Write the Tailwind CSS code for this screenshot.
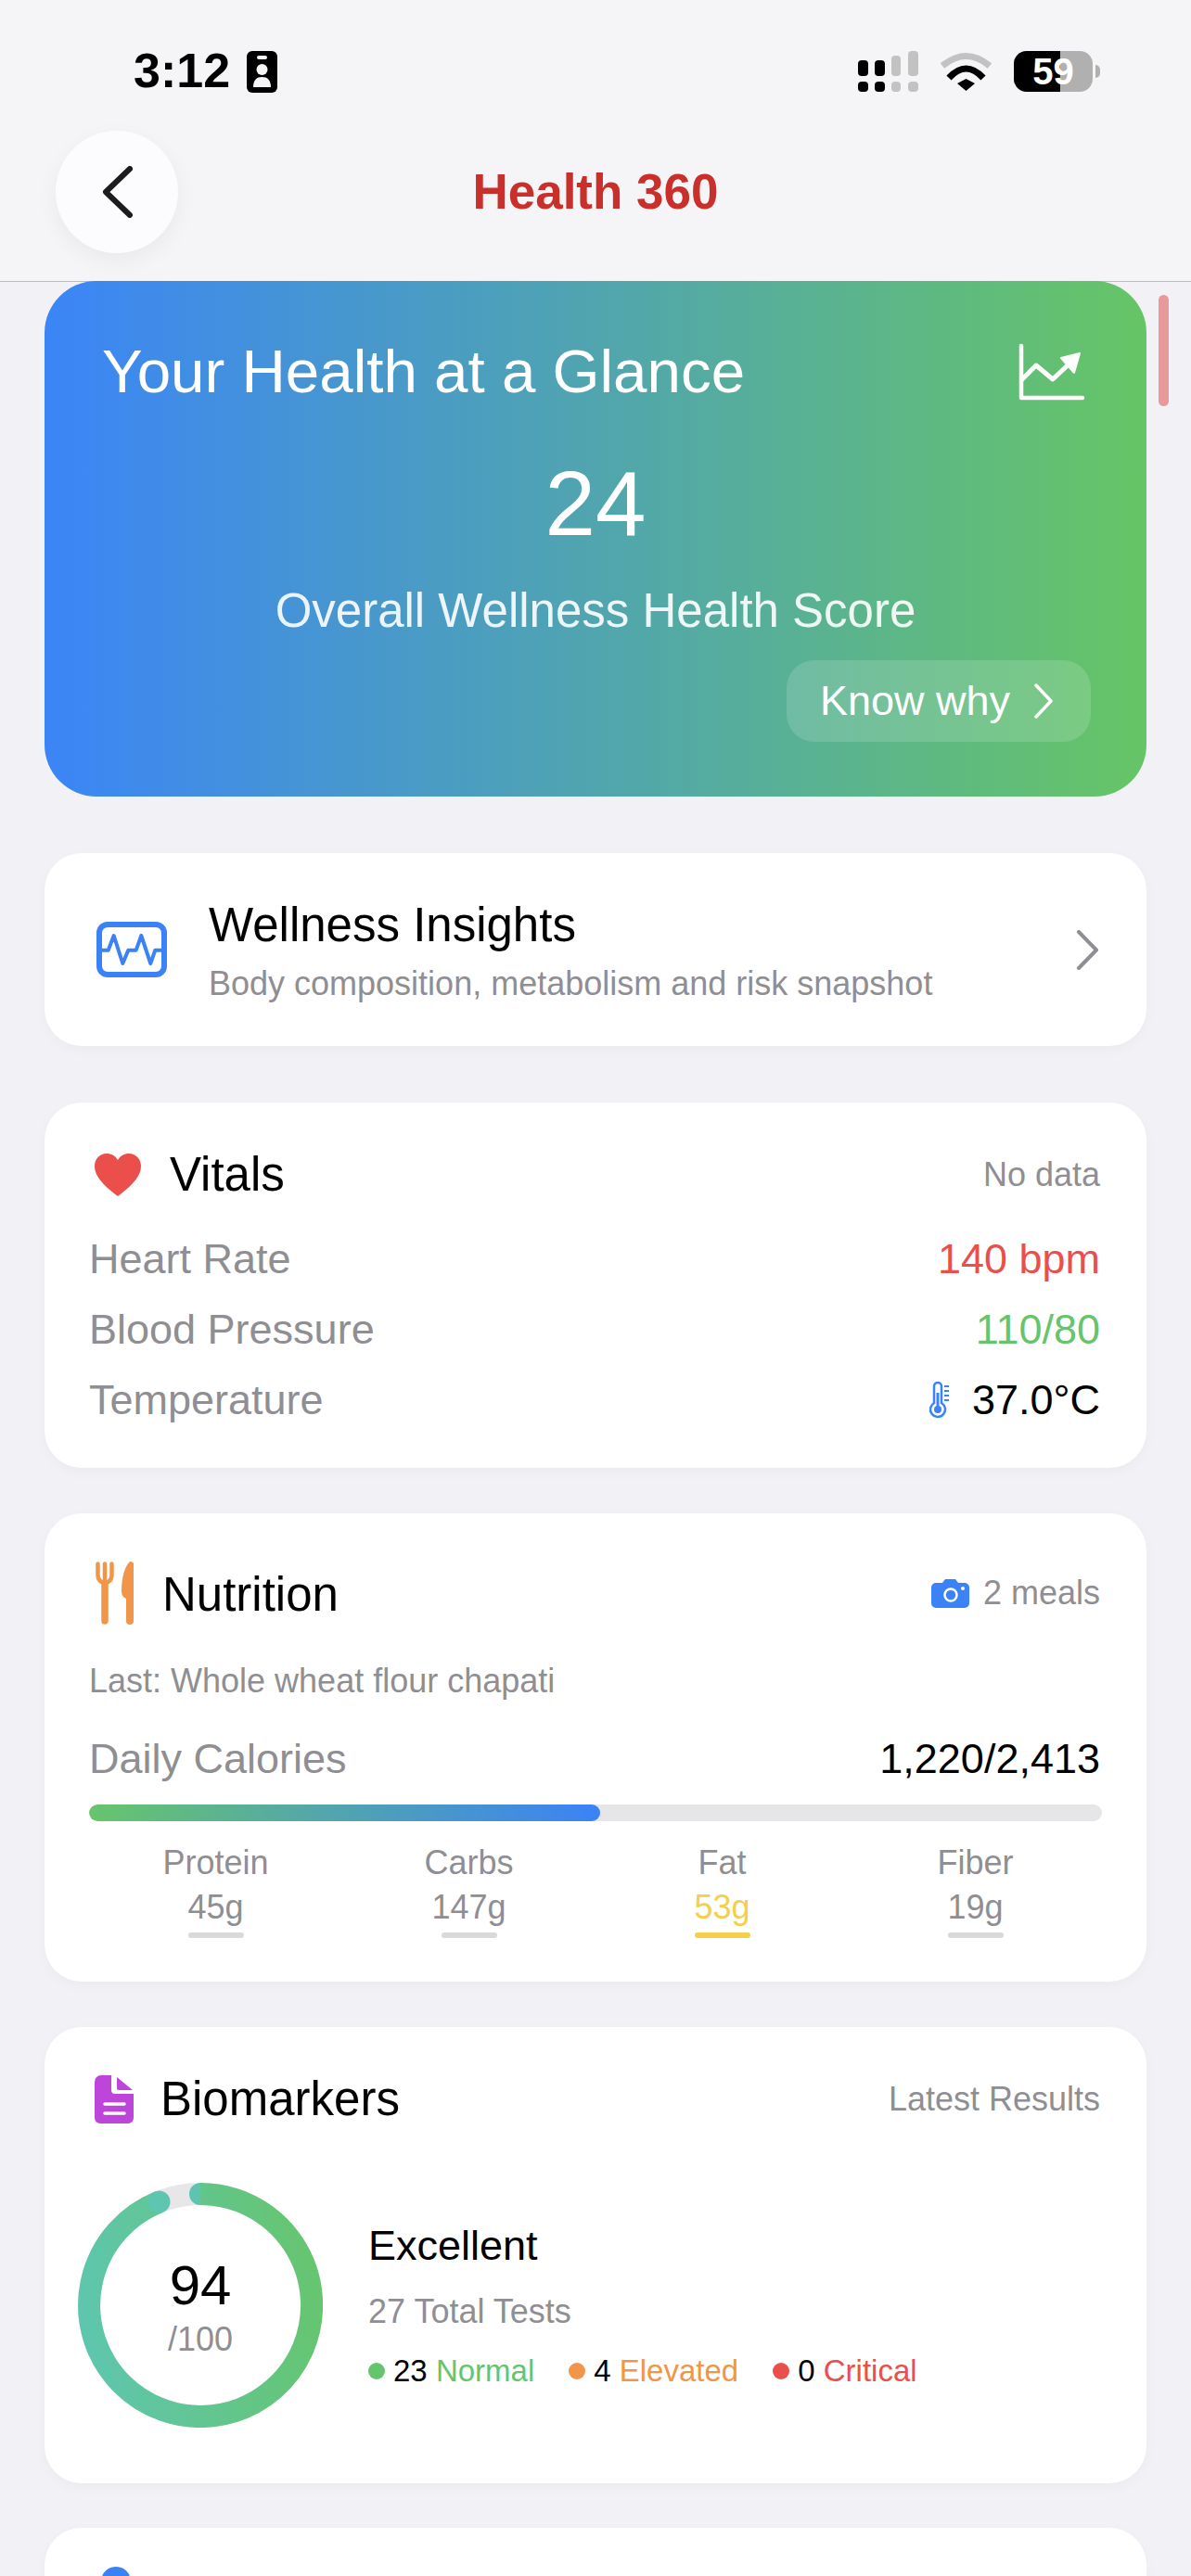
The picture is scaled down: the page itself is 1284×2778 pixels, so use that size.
<!DOCTYPE html>
<html lang="en">
<head>
  <meta charset="UTF-8" />
  <meta name="viewport" content="width=device-width, initial-scale=1.0"/>
  <title>Health 360</title>
  <script src="https://cdn.jsdelivr.net/npm/@tailwindcss/browser@4"></script>
</head>
<body class="bg-[#f1f1f6]">
<div class="relative w-[1284px] h-[2778px] overflow-hidden font-['Liberation_Sans',Arial,sans-serif] text-black">

  <!-- Header -->
  <header class="h-[304px] pt-[32px] bg-[#f5f5f7] border-b border-[#bdbdc1]">
    <div class="h-[90px] flex items-center justify-between pl-[144px] pr-[98px]">
      <div class="flex items-center gap-[18px]">
        <span class="text-[52px] leading-[60px] font-bold pb-[3px]">3:12</span>
        <svg class="w-[33px] h-[45px]" viewBox="0 0 33 45">
          <rect width="33" height="45" rx="6" fill="#000"/>
          <rect x="11" y="5" width="11" height="4" rx="2" fill="#f5f5f7"/>
          <circle cx="16.5" cy="20" r="6" fill="#f5f5f7"/>
          <path d="M7 39c0-8 4-11 9.500-11s9.500 3 9.500 11z" fill="#f5f5f7"/>
        </svg>
      </div>
      <div class="flex items-center gap-[23px]">
        <svg class="w-[65px] h-[44px]" viewBox="0 0 65 44">
          <rect x="0" y="10" width="11" height="17" rx="4" fill="#000"/>
          <rect x="18" y="10" width="11" height="17" rx="4" fill="#000"/>
          <rect x="36" y="5" width="10" height="22" rx="4" fill="#c2c2c2"/>
          <rect x="54" y="0" width="11" height="27" rx="4" fill="#c2c2c2"/>
          <rect x="0" y="33" width="11" height="11" rx="4" fill="#000"/>
          <rect x="18" y="33" width="11" height="11" rx="4" fill="#000"/>
          <rect x="36" y="33" width="10" height="11" rx="4" fill="#c2c2c2"/>
          <rect x="54" y="33" width="11" height="11" rx="4" fill="#c2c2c2"/>
        </svg>
        <svg class="w-[57px] h-[42px]" viewBox="0 0 57 42" fill="none">
          <path d="M3 15Q28.500-6 54 15" stroke="#c2c2c2" stroke-width="7"/>
          <path d="M10 28Q28.500 8 47 28" stroke="#000" stroke-width="7"/>
          <path d="M19 34L28.500 29L38 34L28.500 42Z" fill="#000"/>
        </svg>
        <div class="flex items-center gap-[3px]">
          <div class="relative w-[85px] h-[44px] rounded-[14px] bg-[#b0b0b0] overflow-hidden flex items-center justify-center">
            <div class="absolute left-0 top-0 bottom-0 w-[50px] bg-black"></div>
            <span class="relative text-white font-bold text-[40px] leading-[44px]">59</span>
          </div>
          <div class="w-[5px] h-[14px] rounded-r-full bg-[#b0b0b0]"></div>
        </div>
      </div>
    </div>

    <div class="grid grid-cols-[1fr_auto_1fr] items-center px-[60px] pt-[19px]">
      <div class="w-[132px] h-[132px] rounded-full bg-[#fcfcfe] shadow-[0_8px_24px_rgba(0,0,0,0.05)] flex items-center justify-center">
        <svg class="w-[33px] h-[56px]" viewBox="0 0 33 56" fill="none">
          <path d="M30 3L4 28L30 53" stroke="#1c1c1e" stroke-width="6" stroke-linecap="round" stroke-linejoin="round"/>
        </svg>
      </div>
      <h1 class="text-[53px] leading-[60px] font-bold text-[#c9302c]">Health 360</h1>
      <div></div>
    </div>
  </header>

  <!-- Scroll indicator -->
  <div class="absolute left-[1249px] top-[318px] w-[11px] h-[120px] rounded-full bg-[#e89a9a]"></div>

  <main class="px-[48px] -mt-[1px]">

    <!-- Hero -->
    <section class="h-[556px] rounded-[56px] bg-linear-to-r/srgb from-[#3b85f7] to-[#66c566] pt-[56px] pl-[62px] pr-[60px] text-white">
      <div class="flex items-center justify-between pr-[6px]">
        <h2 class="text-[65.5px] leading-[84px]">Your Health at a Glance</h2>
        <svg class="w-[72px] h-[62px]" viewBox="0 0 72 62" fill="none" stroke="#fff" stroke-linecap="round" stroke-linejoin="round">
          <path d="M3 3V59H69" stroke-width="4.500"/>
          <path d="M4 39L19 24L37 39L54 23" stroke-width="5"/>
          <path d="M46 16L66 11L60 32Z" fill="#fff" stroke-width="2"/>
        </svg>
      </div>
      <div class="mt-[44px] text-center text-[98px] leading-[112px] pr-[2px]">24</div>
      <p class="mt-[30px] text-center text-[51px] leading-[60px] text-white/90 pr-[2px]">Overall Wellness Health Score</p>
      <div class="mt-[23px] flex justify-end">
        <div class="w-[328px] h-[88px] rounded-[30px] bg-white/15 flex items-center pl-[36px] gap-[25px]">
          <span class="text-[45px] leading-[56px]">Know why</span>
          <svg class="w-[22px] h-[38px]" viewBox="0 0 22 38" fill="none">
            <path d="M3 2L19 19L3 36" stroke="#fff" stroke-width="3.500" stroke-linecap="round" stroke-linejoin="round"/>
          </svg>
        </div>
      </div>
    </section>

    <!-- Wellness Insights -->
    <section class="mt-[61px] h-[208px] rounded-[40px] bg-white shadow-[0_4px_14px_rgba(0,0,0,0.03)] flex items-center pl-[56px] pr-[51px]">
      <svg class="w-[76px] h-[60px] shrink-0" viewBox="0 0 76 60" fill="none">
        <rect x="3" y="3" width="70" height="54" rx="9" stroke="#3b82f6" stroke-width="6"/>
        <path d="M6 30.700H12.700L18.700 15L28.300 45L34.300 30.700H42.700L48.300 15L58.300 45L63.300 30.700H71" stroke="#3b82f6" stroke-width="4" stroke-linejoin="round"/>
      </svg>
      <div class="ml-[45px] mt-[3px] flex-1">
        <h3 class="text-[51px] leading-[60px]">Wellness Insights</h3>
        <p class="mt-[11px] text-[36px] leading-[44px] text-[#8e8e93]">Body composition, metabolism and risk snapshot</p>
      </div>
      <svg class="w-[25px] h-[43px] shrink-0" viewBox="0 0 25 43" fill="none">
        <path d="M3 2L22 21.500L3 41" stroke="#8e8e93" stroke-width="4" stroke-linecap="round" stroke-linejoin="round"/>
      </svg>
    </section>

    <!-- Vitals -->
    <section class="mt-[61px] h-[394px] rounded-[40px] bg-white shadow-[0_4px_14px_rgba(0,0,0,0.03)] pt-[48px] pl-[48px] pr-[50px]">
      <div class="flex items-center justify-between">
        <div class="flex items-center">
          <svg class="ml-[6px] w-[50px] h-[46px]" viewBox="0 0 50 46">
            <path d="M25 46C8 33 0 24 0 13.500C0 5.500 6 0 13 0C18 0 22.500 2.500 25 7C27.500 2.500 32 0 37 0C44 0 50 5.500 50 13.500C50 24 42 33 25 46Z" fill="#ea4f4b"/>
          </svg>
          <h3 class="ml-[31px] text-[51px] leading-[60px]">Vitals</h3>
        </div>
        <span class="text-[36px] leading-[44px] text-[#8e8e93]">No data</span>
      </div>
      <div class="mt-[23px] text-[45px] leading-[76px]">
        <div class="flex justify-between"><span class="text-[#8e8e93]">Heart Rate</span><span class="text-[#ea4f4b]">140 bpm</span></div>
        <div class="flex justify-between"><span class="text-[#8e8e93]">Blood Pressure</span><span class="text-[#66c56c]">110/80</span></div>
        <div class="flex justify-between">
          <span class="text-[#8e8e93]">Temperature</span>
          <span class="flex items-center gap-[24px]">
            <svg class="w-[22px] h-[40px]" viewBox="0 0 22 40" fill="none" stroke="#3b82f6">
              <path d="M5 23V5a4 4 0 0 1 8 0v18a8 8 0 1 1-8 0z" stroke-width="2.500"/>
              <circle cx="9" cy="30" r="4" fill="#3b82f6" stroke="none"/>
              <path d="M9 12V28" stroke-width="3"/>
              <path d="M16 5h5M16 10h5M16 15h5M16 20h5" stroke-width="2"/>
            </svg>
            37.0°C
          </span>
        </div>
      </div>
    </section>

    <!-- Nutrition -->
    <section class="mt-[49px] h-[505px] rounded-[40px] bg-white shadow-[0_4px_14px_rgba(0,0,0,0.03)] pt-[56px] px-[48px]">
      <div class="flex items-center justify-between h-[60px] pr-[2px]">
        <div class="flex items-center">
          <svg class="ml-[7px] w-[42px] h-[68px]" viewBox="0 0 42 68" fill="none">
            <path d="M2.500 2.500V15a7.500 8 0 0 0 15 0V2.500" stroke="#f0954a" stroke-width="4.500" stroke-linecap="round"/>
            <path d="M10 2.500V26" stroke="#f0954a" stroke-width="4.500" stroke-linecap="round"/>
            <path d="M10 26V64" stroke="#f0954a" stroke-width="7.500" stroke-linecap="round"/>
            <path d="M37 0C42 0 41 3 41 5V64A4 4 0 0 1 33 64V40Q28 38 28 32C28 18 31 6 37 0Z" fill="#f0954a"/>
          </svg>
          <h3 class="ml-[30px] pt-[3px] text-[51px] leading-[60px]">Nutrition</h3>
        </div>
        <span class="flex items-center gap-[15px] text-[36px] leading-[44px] text-[#8e8e93]">
          <svg class="w-[41px] h-[31px]" viewBox="0 0 41 31">
            <path d="M5 4H12L15 0H26L29 4H36A5 5 0 0 1 41 9V26A5 5 0 0 1 36 31H5A5 5 0 0 1 0 26V9A5 5 0 0 1 5 4Z" fill="#3b82f6"/>
            <circle cx="21" cy="17" r="6.500" fill="none" stroke="#fff" stroke-width="2.500"/>
            <circle cx="34" cy="10" r="2" fill="#fff"/>
          </svg>
          2 meals
        </span>
      </div>
      <p class="mt-[43px] text-[36px] leading-[44px] text-[#8e8e93]">Last: Whole wheat flour chapati</p>
      <div class="mt-[34px] flex justify-between pr-[2px] text-[45px] leading-[56px]">
        <span class="text-[#8e8e93]">Daily Calories</span>
        <span>1,220/2,413</span>
      </div>
      <div class="mt-[21px] h-[18px] rounded-full bg-[#e6e6e8] overflow-hidden">
        <div class="h-full rounded-full bg-linear-to-r/srgb from-[#66c56c] to-[#3b82f6]" style="width: 50.500%"></div>
      </div>
      <div class="mt-[23px] grid grid-cols-4 text-center text-[36px] leading-[44px] text-[#8e8e93]">
        <div>
          <div>Protein</div>
          <div class="mt-[4px]">45g</div>
          <div class="mt-[5px] mx-auto w-[60px] h-[6px] rounded-full bg-[#d9d9d9]"></div>
        </div>
        <div>
          <div>Carbs</div>
          <div class="mt-[4px]">147g</div>
          <div class="mt-[5px] mx-auto w-[60px] h-[6px] rounded-full bg-[#d9d9d9]"></div>
        </div>
        <div>
          <div>Fat</div>
          <div class="mt-[4px] text-[#f4cf4b]">53g</div>
          <div class="mt-[5px] mx-auto w-[60px] h-[6px] rounded-full bg-[#f4cf4b]"></div>
        </div>
        <div>
          <div>Fiber</div>
          <div class="mt-[4px]">19g</div>
          <div class="mt-[5px] mx-auto w-[60px] h-[6px] rounded-full bg-[#d9d9d9]"></div>
        </div>
      </div>
    </section>

    <!-- Biomarkers -->
    <section class="mt-[49px] h-[492px] rounded-[40px] bg-white shadow-[0_4px_14px_rgba(0,0,0,0.03)] pt-[48px] px-[48px]">
      <div class="flex items-center justify-between h-[60px] pr-[2px]">
        <div class="flex items-center">
          <svg class="ml-[6px] w-[42px] h-[54px]" viewBox="0 0 42 54" fill="none">
            <path d="M7 1H18V17A4 4 0 0 0 22 21H42V47A6 6 0 0 1 36 53H6A6 6 0 0 1 0 47V8A7 7 0 0 1 7 1Z" fill="#be45d9"/>
            <path d="M24 3L41 17H26A2 2 0 0 1 24 15Z" fill="#be45d9"/>
            <path d="M11 32H32M11 42H32" stroke="#fff" stroke-width="3.500" stroke-linecap="round"/>
          </svg>
          <h3 class="ml-[29px] text-[51px] leading-[60px]">Biomarkers</h3>
        </div>
        <span class="text-[36px] leading-[44px] text-[#8e8e93]">Latest Results</span>
      </div>
      <div class="mt-[60px] -ml-[12px] flex">
        <div class="relative w-[264px] h-[264px] shrink-0">
          <svg class="w-[264px] h-[264px]" viewBox="0 0 264 264" fill="none">
            <defs>
              <linearGradient id="ring" gradientUnits="userSpaceOnUse" x1="264" y1="40" x2="0" y2="80">
                <stop offset="0" stop-color="#66c56c"/>
                <stop offset="1" stop-color="#5ec6ac"/>
              </linearGradient>
            </defs>
            <circle cx="132" cy="132" r="120" stroke="#e7e7ea" stroke-width="24"/>
            <circle cx="132" cy="12" r="12" fill="#5ec4b0"/>
            <path d="M132 12A120 120 0 1 1 87.500 20.600" stroke="url(#ring)" stroke-width="24"/>
            <circle cx="87.500" cy="20.600" r="12" fill="#5ec6b0"/>
          </svg>
          <div class="absolute inset-0 pt-[79px] text-center">
            <div class="text-[60px] leading-[64px]">94</div>
            <div class="mt-[4px] text-[36px] leading-[44px] text-[#8e8e93]">/100</div>
          </div>
        </div>
        <div class="ml-[49px] pt-[40px]">
          <div class="text-[45px] leading-[56px]">Excellent</div>
          <div class="mt-[21px] text-[36px] leading-[44px] text-[#8e8e93]">27 Total Tests</div>
          <div class="mt-[22px] flex items-center gap-[37px] text-[33px] leading-[40px]">
            <span class="flex items-center gap-[9px]">
              <i class="w-[18px] h-[18px] rounded-full bg-[#66c56c]"></i>
              <span>23 <span class="text-[#66c56c]">Normal</span></span>
            </span>
            <span class="flex items-center gap-[9px]">
              <i class="w-[18px] h-[18px] rounded-full bg-[#f0954a]"></i>
              <span>4 <span class="text-[#f0954a]">Elevated</span></span>
            </span>
            <span class="flex items-center gap-[9px]">
              <i class="w-[18px] h-[18px] rounded-full bg-[#ea4f4b]"></i>
              <span>0 <span class="text-[#ea4f4b]">Critical</span></span>
            </span>
          </div>
        </div>
      </div>
    </section>

    <!-- Medications (cut off by the viewport) -->
    <section class="mt-[48px] h-[300px] rounded-[40px] bg-white shadow-[0_4px_14px_rgba(0,0,0,0.03)] pt-[43px] px-[48px]">
      <div class="flex items-start">
        <svg class="ml-[4px] -mt-[1px] w-[50px] h-[60px]" viewBox="0 0 50 60">
          <path d="M25 0C34 0 41 7 41 16V60H9V16C9 7 16 0 25 0Z" fill="#3b82f6"/>
        </svg>
        <h3 class="ml-[39px] text-[51px] leading-[60px]">Medications</h3>
      </div>
    </section>
  </main>
</div>
</body>
</html>
